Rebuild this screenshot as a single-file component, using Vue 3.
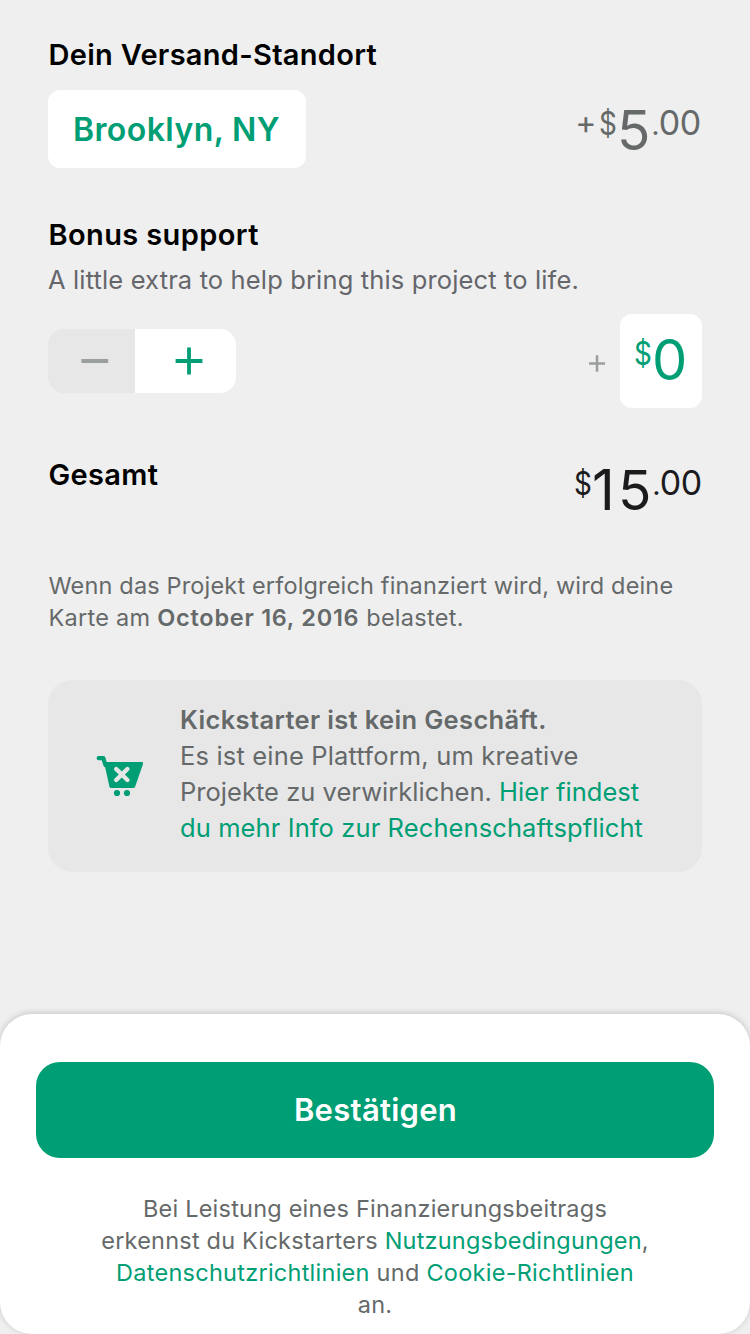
<script setup>
const location = 'Brooklyn, NY'
const chargeDate = 'October 16, 2016'
</script>

<template>
  <div class="screen">
    <main class="content">
      <h2 class="title">Dein Versand-Standort</h2>
      <div class="row ship-row">
        <button class="location">{{ location }}</button>
        <div class="price muted ship-price"><span class="plus">+</span><span class="cur">$</span><span class="whole">5</span><span class="dot">.</span><span class="cents">00</span></div>
      </div>

      <h2 class="title bonus">Bonus support</h2>
      <p class="hint">A little extra to help bring this project to life.</p>
      <div class="row bonus-row">
        <div class="stepper">
          <button class="minus" aria-label="Weniger">
            <svg width="28" height="28" viewBox="0 0 28 28"><path d="M.4 14H27.2" stroke="#9b9e9e" stroke-width="3.8" /></svg>
          </button>
          <button class="more" aria-label="Mehr">
            <svg width="28" height="28" viewBox="0 0 28 28"><path d="M.6 14H27.4M14 .6V27.4" stroke="#009e74" stroke-width="3.8" /></svg>
          </button>
        </div>
        <div class="amount">
          <svg class="amount-plus" width="16" height="17" viewBox="0 0 16 17"><path d="M0 8.5H16M8 .3V16.8" stroke="#9b9e9e" stroke-width="2.6" /></svg>
          <div class="price box"><span class="cur">$</span><span class="zero">0</span></div>
        </div>
      </div>

      <div class="row total">
        <h2 class="title gesamt">Gesamt</h2>
        <div class="price total-price"><span class="cur">$</span><span class="one">1</span><span class="whole">5</span><span class="dot">.</span><span class="cents">00</span></div>
      </div>

      <p class="note">
        <span class="line n1">Wenn das Projekt erfolgreich finanziert wird, wird deine</span>
        <span class="line n2">Karte am <b>{{ chargeDate }}</b> belastet.</span>
      </p>

      <section class="card">
        <svg class="cart" width="48" height="42" viewBox="0 0 48 42">
          <path d="M2.7 3.2H7.3L9.4 10" fill="none" stroke="#009e74" stroke-width="4.2" stroke-linecap="round" stroke-linejoin="round" />
          <path d="M8 7H45.6Q47.6 7 47 8.9L39.2 31.5Q38.6 33 37 33H15.4Q13.8 33 13.4 31.4Z" fill="#009e74" />
          <path d="M20.2 14L31.4 25M31.4 14L20.2 25" stroke="#e7e7e7" stroke-width="4.4" stroke-linecap="round" />
          <circle cx="21" cy="38" r="3.1" fill="#009e74" />
          <circle cx="31" cy="38" r="3.1" fill="#009e74" />
        </svg>
        <p class="about">
          <strong class="line k1">Kickstarter ist kein Geschäft.</strong>
          <span class="line k2">Es ist eine Plattform, um kreative</span>
          <span class="line k3">Projekte zu verwirklichen. <a>Hier findest</a></span>
          <span class="line k4"><a>du mehr Info zur Rechenschaftspflicht</a></span>
        </p>
      </section>
    </main>

    <footer class="sheet">
      <button class="confirm">Bestätigen</button>
      <p class="terms">
        <span class="line">Bei Leistung eines Finanzierungsbeitrags</span>
        <span class="line">erkennst du Kickstarters <a>Nutzungsbedingungen</a>,</span>
        <span class="line t3"><a>Datenschutzrichtlinien</a> und <a>Cookie-Richtlinien</a></span>
        <span class="line">an.</span>
      </p>
    </footer>
  </div>
</template>

<style>
html, body { background: #efefef; }
</style>

<style scoped>
.screen {
  width: 750px;
  height: 1334px;
  overflow: hidden;
  display: flex;
  flex-direction: column;
  justify-content: space-between;
  background: #efefef;
  color: #656969;
  font-family: Inter, "Liberation Sans", sans-serif;
}
h2, p { margin: 0; }
button { border: 0; padding: 0; font-family: inherit; }
a { color: #009e74; }
.line { display: block; white-space: nowrap; }
.content { padding: 37px 48px 0; }
.title { padding-left: .5px; font-size: 29px; line-height: 36px; font-weight: 600; color: #000; letter-spacing: .29px; }
.row { display: flex; justify-content: space-between; }
.ship-row { height: 95px; align-items: flex-start; }
.location {
  width: 258px;
  height: 78px;
  margin-top: 17px;
  padding-right: 1px;
  border-radius: 12px;
  background: #fff;
  color: #009e74;
  font-size: 32px;
  font-weight: 600;
  letter-spacing: .42px;
}
.price { font-size: 56px; line-height: 60px; height: 60px; white-space: nowrap; display: flex; align-items: baseline; }
.price > span { display: block; }
.price .cur, .price .plus, .price .dot, .price .cents { line-height: 34px; }
.cur { width: 18px; font-size: 32px; transform: translate(1px, -15px) scaleX(.87); transform-origin: left; }
.plus { font-size: 32px; transform: translateY(-16px); margin-right: 1.5px; }
.whole { transform: translateX(1px); font-size: 55px; }
.dot { font-size: 29px; transform: translateY(-15px); margin-left: 2px; margin-right: -1px; }
.cents { font-size: 34px; font-weight: 400; letter-spacing: -.3px; transform: translateY(-15px); }
.muted { color: #656969; }
.ship-price { margin: 27px 1px 0 0; }
.bonus { margin-top: 49px; letter-spacing: .38px; }
.hint { margin-top: 9px; font-size: 25.5px; line-height: 36px; letter-spacing: .14px; color: #65666b; white-space: nowrap; }
.bonus-row { margin-top: 16px; height: 94px; align-items: center; }
.stepper { display: flex; width: 188px; height: 64px; border-radius: 16px; overflow: hidden; }
.stepper button { display: flex; align-items: center; }
.minus { width: 87px; padding-left: 33px; background: #e7e7e7; }
.more { flex: 1; padding-left: 40px; background: #fff; }
.amount { display: flex; align-items: center; }
.amount-plus { margin: 5px 15px 0 0; }
.box {
  box-sizing: border-box;
  width: 82px;
  height: 94px;
  padding: 16px 0 0 13px;
  border-radius: 12px;
  background: #fff;
  color: #009e74;
}
.zero { margin-left: 1px; font-weight: 400; font-size: 56px; }
.total { margin-top: 48px; height: 64px; }
.gesamt { margin-top: 1px; letter-spacing: .33px; }
.total-price { margin-top: 4px; color: #1b1b1e; }
.one { margin-left: 1px; margin-right: 2px; }
.note { margin-top: 50px; padding-left: .5px; font-size: 23.5px; line-height: 32px; }
.n1 { letter-spacing: .16px; }
.n2 { letter-spacing: .27px; }
.n2 b { font-weight: 600; letter-spacing: .74px; }
.card {
  margin-top: 46px;
  height: 192px;
  box-sizing: border-box;
  padding: 22px 0 0 48px;
  display: flex;
  border-radius: 24px;
  background: #e7e7e7;
}
.cart { margin-top: 53px; flex: none; }
.about { margin-left: 36px; font-size: 25.5px; line-height: 36px; }
.k1 { font-weight: 600; letter-spacing: .35px; }
.k2 { letter-spacing: .17px; }
.k3 { letter-spacing: .03px; }
.k4 { letter-spacing: .1px; }
.sheet {
  height: 320px;
  box-sizing: border-box;
  padding: 48px 36px 0;
  border-radius: 32px;
  background: #fff;
  box-shadow: 0 -1px 6px rgba(0, 0, 0, .18);
}
.confirm {
  display: block;
  width: 100%;
  height: 96px;
  padding: 0 0 2px 1px;
  border-radius: 24px;
  background: #009e74;
  color: #fff;
  font-size: 31px;
  font-weight: 600;
  letter-spacing: .28px;
}
.terms { margin-top: 35px; text-align: center; font-size: 23.5px; line-height: 32px; letter-spacing: .21px; }
.t3 { letter-spacing: .26px; }
</style>
